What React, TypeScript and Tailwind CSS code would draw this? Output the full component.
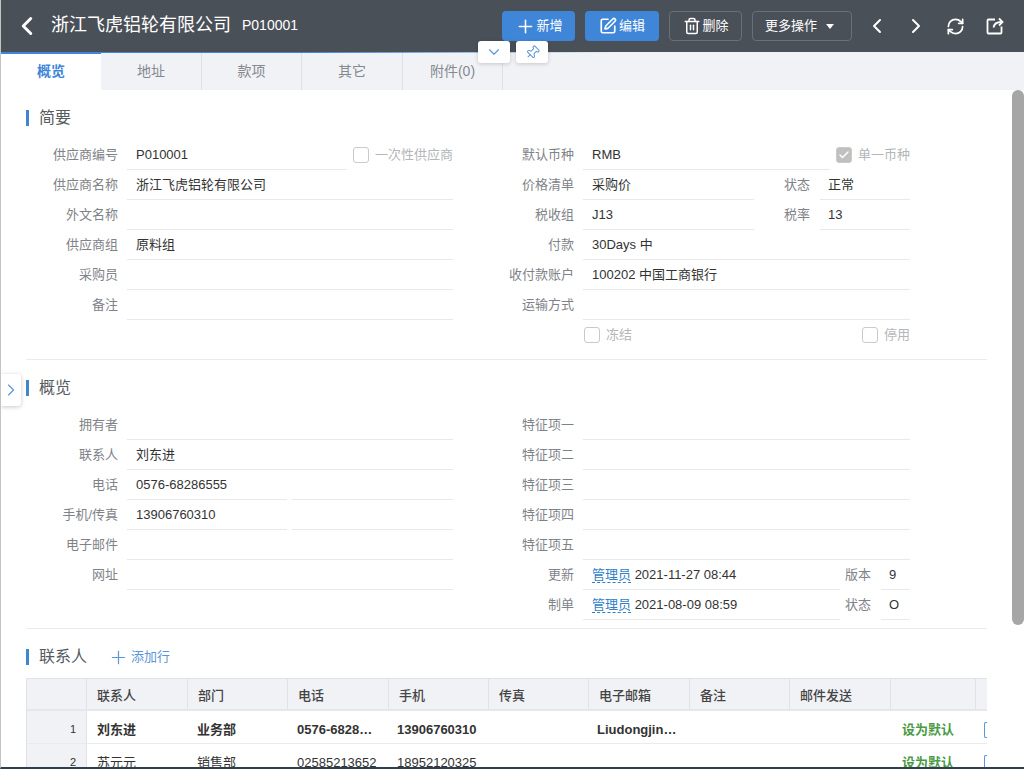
import type { ReactNode } from "react";
import { Check, ChevronDown, ChevronLeft, ChevronRight, Pin, Plus, RefreshCw, SquarePen, Trash2 } from "lucide-react";

const tabs = [
  { title: "概览", width: "w-[100px]" },
  { title: "地址", width: "w-[101px]" },
  { title: "款项", width: "w-[100px]" },
  { title: "其它", width: "w-[101px]" },
  { title: "附件(0)", width: "w-[100px]" },
];

const columns = [
  { title: "联系人", width: "w-[101px]" },
  { title: "部门", width: "w-[100px]" },
  { title: "电话", width: "w-[101px]" },
  { title: "手机", width: "w-[100px]" },
  { title: "传真", width: "w-[100px]" },
  { title: "电子邮箱", width: "w-[101px]" },
  { title: "备注", width: "w-[100px]" },
  { title: "邮件发送", width: "w-[101px]" },
  { title: "", width: "w-[85px]" },
];

const contacts = [
  { no: 1, cells: ["刘东进", "业务部", "0576-6828…", "13906760310", "", "Liudongjin…"], strong: true },
  { no: 2, cells: ["苏元元", "销售部", "02585213652", "18952120325", "", ""], strong: false },
];

function Label({ children, className = "w-[91px]" }: { children?: ReactNode; className?: string }) {
  return <div className={`${className} shrink-0 text-right leading-[29px] text-[#7f8389]`}>{children}</div>;
}

function Value({ children, className = "flex-1" }: { children?: ReactNode; className?: string }) {
  return (
    <div className={`${className} h-[30px] border-b border-[#e8e9eb] pl-[9px] leading-[29px] text-[#333]`}>{children}</div>
  );
}

function Row({ children }: { children: ReactNode }) {
  return <div className="flex h-[30px]">{children}</div>;
}

function Field({ label, value }: { label: string; value?: ReactNode }) {
  return (
    <Row>
      <Label>{label}</Label>
      <Value className="ml-[9px] flex-1">{value}</Value>
    </Row>
  );
}

function CheckItem({ label, checked, className }: { label: string; checked?: boolean; className?: string }) {
  return (
    <div className={`flex h-[30px] shrink-0 items-center gap-[6px] text-[#b4b6b9] ${className ?? ""}`}>
      <span
        className={`flex h-[16px] w-[16px] items-center justify-center rounded-[3px] border border-[#c9cacc] ${
          checked ? "bg-[#c0c0c0]" : "bg-white"
        }`}
      >
        {checked ? <Check size={12} strokeWidth={3} className="text-white" /> : null}
      </span>
      {label}
    </div>
  );
}

function SectionTitle({ children, extra }: { children: ReactNode; extra?: ReactNode }) {
  return (
    <div className="flex h-[16px] items-center">
      <span className="h-[16px] w-[3px] bg-[#3f86d1]" />
      <span className="ml-[10px] text-[16px] leading-[16px] text-[#555a60]">{children}</span>
      {extra}
    </div>
  );
}

function UserLink() {
  return <span className="border-b border-dashed border-[#2f7fc8] text-[#2f7fc8]">管理员</span>;
}

function Header() {
  return (
    <header className="flex h-[52px] shrink-0 items-center bg-[#4a5058] text-white">
      <ChevronLeft size={30} strokeWidth={2.4} className="ml-[11px] text-white" />
      <span className="mb-[2px] ml-[9px] text-[18px]">浙江飞虎铝轮有限公司</span>
      <span className="mb-[2px] ml-[11px] text-[14px]">P010001</span>
      <div className="ml-[204px] flex items-center text-[13px]">
        <button className="flex h-[30px] w-[73px] items-center justify-center gap-[1px] rounded-[4px] bg-[#3f86d8]">
          <Plus size={21} strokeWidth={1.8} />
          新增
        </button>
        <button className="ml-[10px] flex h-[30px] w-[74px] items-center justify-center gap-[2px] rounded-[4px] bg-[#3f86d8]">
          <SquarePen size={18} strokeWidth={2.2} />
          编辑
        </button>
        <button className="ml-[10px] flex h-[30px] w-[73px] items-center justify-center gap-[2px] rounded-[4px] border border-[#6a7078]">
          <Trash2 size={18} />
          删除
        </button>
        <button className="ml-[10px] flex h-[30px] w-[100px] items-center gap-[9px] rounded-[4px] border border-[#6a7078] pl-[12px]">
          更多操作
          <span className="h-0 w-0 border-x-[4px] border-t-[5px] border-x-transparent border-t-white" />
        </button>
        <ChevronLeft size={24} strokeWidth={2} className="ml-[13px]" />
        <ChevronRight size={24} strokeWidth={2} className="ml-[15px]" />
        <RefreshCw size={19} strokeWidth={2.2} className="ml-[18px]" />
        <svg width="18" height="18" viewBox="0 0 18 18" fill="none" stroke="currentColor" strokeWidth="1.8" className="ml-[21px]">
          <path d="M9 2.5H2.5a1 1 0 0 0-1 1v12a1 1 0 0 0 1 1h12a1 1 0 0 0 1-1V9.5" />
          <path d="M7.5 10.5c.5-3.500 3-5.500 8-5.500" />
          <path d="M13 1.500l3.500 3.500-3.500 3.500" />
        </svg>
      </div>
    </header>
  );
}

function Tabs() {
  return (
    <div className="relative flex h-[38px] shrink-0 bg-[#f1f2f6] text-[14px] text-[#85898f]">
      <div className="absolute left-0 top-0 h-px w-[620px] bg-linear-to-r from-[#3f86d8] via-[#3f86d8] to-transparent" />
      {tabs.map((tab, i) => (
        <div
          key={tab.title}
          className={
            i === 0
              ? `${tab.width} relative flex items-center justify-center border-t-2 border-[#3f86d8] bg-white pb-[2px] font-bold text-[#3f86d8]`
              : `${tab.width} flex items-center justify-center border-r border-[#dfe0e4]`
          }
        >
          {tab.title}
        </div>
      ))}
    </div>
  );
}

function SummarySection() {
  return (
    <section className="border-b border-[#eaebed] pb-[9px]">
      <SectionTitle>简要</SectionTitle>
      <div className="mt-[14px] flex gap-[30px]">
        <div className="ml-px w-[426px]">
          <Row>
            <Label>供应商编号</Label>
            <Value className="ml-[9px] w-[220px]">P010001</Value>
            <CheckItem label="一次性供应商" className="ml-auto" />
          </Row>
          <Field label="供应商名称" value="浙江飞虎铝轮有限公司" />
          <Field label="外文名称" />
          <Field label="供应商组" value="原料组" />
          <Field label="采购员" />
          <Field label="备注" />
        </div>
        <div className="w-[427px]">
          <Row>
            <Label>默认币种</Label>
            <Value className="ml-[9px] w-[247px]">RMB</Value>
            <CheckItem label="单一币种" checked className="ml-auto" />
          </Row>
          <Row>
            <Label>价格清单</Label>
            <Value className="ml-[9px] w-[171px]">采购价</Value>
            <Label className="w-[56px]">状态</Label>
            <Value className="ml-[10px] flex-1 !pl-[8px]">正常</Value>
          </Row>
          <Row>
            <Label>税收组</Label>
            <Value className="ml-[9px] w-[171px]">J13</Value>
            <Label className="w-[56px]">税率</Label>
            <Value className="ml-[10px] flex-1 !pl-[8px]">13</Value>
          </Row>
          <Field label="付款" value="30Days 中" />
          <Field label="收付款账户" value="100202 中国工商银行" />
          <Field label="运输方式" />
          <Row>
            <div className="ml-[101px] flex flex-1 justify-between">
              <CheckItem label="冻结" />
              <CheckItem label="停用" />
            </div>
          </Row>
        </div>
      </div>
    </section>
  );
}

function OverviewSection() {
  return (
    <section className="border-b border-[#eaebed] pb-[8px] pt-[20px]">
      <SectionTitle>概览</SectionTitle>
      <div className="mt-[14px] flex gap-[30px]">
        <div className="ml-px w-[426px]">
          <Field label="拥有者" />
          <Field label="联系人" value="刘东进" />
          <Row>
            <Label>电话</Label>
            <Value className="ml-[9px] w-[160px]">0576-68286555</Value>
            <Value className="ml-[5px] flex-1" />
          </Row>
          <Row>
            <Label>手机/传真</Label>
            <Value className="ml-[9px] w-[160px]">13906760310</Value>
            <Value className="ml-[5px] flex-1" />
          </Row>
          <Field label="电子邮件" />
          <Field label="网址" />
        </div>
        <div className="w-[427px]">
          <Field label="特征项一" />
          <Field label="特征项二" />
          <Field label="特征项三" />
          <Field label="特征项四" />
          <Field label="特征项五" />
          <Row>
            <Label>更新</Label>
            <Value className="ml-[9px] w-[257px]">
              <UserLink /> 2021-11-27 08:44
            </Value>
            <Label className="w-[31px]">版本</Label>
            <Value className="ml-[10px] flex-1 !pl-[8px]">9</Value>
          </Row>
          <Row>
            <Label>制单</Label>
            <Value className="ml-[9px] w-[257px]">
              <UserLink /> 2021-08-09 08:59
            </Value>
            <Label className="w-[31px]">状态</Label>
            <Value className="ml-[10px] flex-1 !pl-[8px]">O</Value>
          </Row>
        </div>
      </div>
    </section>
  );
}

function ContactTable() {
  return (
    <section className="pt-[20px]">
      <SectionTitle
        extra={
          <span className="ml-[21px] flex items-center gap-[2px] text-[13px] text-[#5b97d8]">
            <Plus size={21} strokeWidth={1.4} />
            添加行
          </span>
        }
      >
        联系人
      </SectionTitle>
      <div className="mt-[13px] w-[961px] overflow-hidden border-l border-t border-[#e1e2e6]">
        <div className="flex h-[32px] border-b-2 border-[#e6e7ea] bg-[#f1f2f6] font-medium text-[#444]">
          <div className="w-[60px] shrink-0 border-r border-[#e1e2e6]" />
          {columns.map((col) => (
            <div key={col.title || "actions"} className={`${col.width} shrink-0 border-r border-[#e1e2e6] pl-[10px] leading-[33px]`}>
              {col.title}
            </div>
          ))}
        </div>
        {contacts.map((row) => (
          <div key={row.no} className={`flex h-[33px] border-b border-[#eaebed] text-[#333] ${row.strong ? "font-bold" : ""}`}>
            <div className="w-[60px] shrink-0 border-r border-[#e1e2e6] bg-[#f1f2f6] pr-[10px] text-right text-[11px] font-medium leading-[37px]">
              {row.no}
            </div>
            <div className="flex w-[804px] shrink-0">
              {row.cells.map((cell, i) => (
                <div key={i} className="w-[100px] shrink-0 pl-[10px] leading-[37px]">
                  {cell}
                </div>
              ))}
            </div>
            <div className="w-[85px] shrink-0 pl-[11px] font-bold leading-[37px] text-[#4a9a45]">设为默认</div>
            <div className="ml-[8px] mt-[11px] h-[16px] w-[6px] shrink-0 rounded-l-[2px] border-y border-l border-[#5b97d8]" />
          </div>
        ))}
      </div>
    </section>
  );
}

export default function App() {
  return (
    <div className="relative flex h-[769px] w-[1024px] flex-col overflow-hidden border-b-2 border-l border-b-[#2f3f4d] border-l-[#c4c4c4] bg-white font-['Liberation_Sans','Noto_Sans_CJK_SC',sans-serif] text-[13px]">
      <Header />
      <Tabs />
      <div className="flex min-h-0 flex-1">
        <main className="min-w-0 flex-1 pl-[25px] pr-[25px] pt-[20px]">
          <SummarySection />
          <OverviewSection />
          <ContactTable />
        </main>
        <div className="w-[12px] shrink-0">
          <div className="h-[535px] rounded-[6px] bg-[#a6a6a6]" />
        </div>
      </div>

      <button className="absolute left-[477px] top-[41px] flex h-[22px] w-[32px] items-center justify-center rounded-[3px] bg-white text-[#5b97d8] shadow-[0_1px_4px_rgba(0,0,0,0.18)]">
        <ChevronDown size={18} strokeWidth={1.5} />
      </button>
      <button className="absolute left-[515px] top-[41px] flex h-[22px] w-[32px] items-center justify-center rounded-[3px] bg-white text-[#5b97d8] shadow-[0_1px_4px_rgba(0,0,0,0.18)]">
        <Pin size={15} strokeWidth={1.6} className="rotate-45" />
      </button>
      <button className="absolute left-0 top-[374px] flex h-[32px] w-[20px] items-center justify-center rounded-r-[3px] bg-white text-[#5b97d8] shadow-[0_1px_4px_rgba(0,0,0,0.22)]">
        <ChevronRight size={20} strokeWidth={1.4} />
      </button>
    </div>
  );
}
